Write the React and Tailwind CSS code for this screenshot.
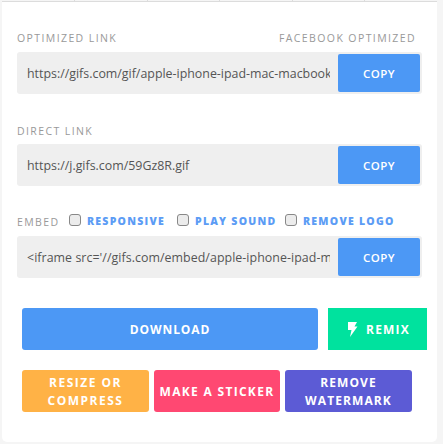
function LinkRow({ value, textClass }) {
  return (
    <div className="ml-[15px] flex h-[42px] w-[405px] items-center rounded-[3px] bg-[#efefef] pl-[10px] pr-[2px]">
      <div className={`mr-[8px] flex-1 overflow-hidden whitespace-nowrap pt-[2px] text-[#555] ${textClass}`}>{value}</div>
      <button className="flex h-[38px] w-[82px] items-center justify-center rounded-[2px] bg-[#4c98f5] pt-[1px] text-[11.5px] font-semibold tracking-[0.5px] text-white">COPY</button>
    </div>
  );
}

function Check({ label, className }) {
  return (
    <span className={`flex items-center ${className}`}>
      <span className="mr-[6px] mb-[3px] h-[12px] w-[12px] rounded-[3px] border border-[#888] bg-[#ececec]" />
      <span className="pt-[2px] text-[10.5px] font-extrabold tracking-[1.25px] text-[#5c9cf5]">{label}</span>
    </span>
  );
}

const label = "h-[14px] text-[10.5px] leading-[16px] tracking-[1.4px] text-[#999]";

export default function App() {
  return (
    <div className="h-[444px] w-[443px] bg-[#f5f5f5] pl-[2px] font-['Open_Sans',sans-serif]">
      <div className="h-[442px] w-[435px] rounded-b-[5px] bg-white">
        <div className="flex h-[1px] bg-[#f5f5f5] pl-[72px]">
          <span className="w-[72.5px] border-l border-[#dcdcdc]" />
          <span className="w-[72.5px] border-l border-[#dcdcdc]" />
          <span className="w-[72.5px] border-l border-[#dcdcdc]" />
          <span className="w-[72.5px] border-l border-[#dcdcdc]" />
          <span className="w-[72.5px] border-l border-[#dcdcdc]" />
        </div>
        <div className="h-[1px] bg-[#dcdcdc]" />
        <div className={`ml-[15px] mr-[21px] mt-[28px] flex justify-between ${label}`}>
          <span>OPTIMIZED LINK</span>
          <span>FACEBOOK OPTIMIZED</span>
        </div>
        <div className="mt-[8px]"><LinkRow textClass="text-[12.4px]" value="https://gifs.com/gif/apple-iphone-ipad-mac-macbook-pro" /></div>
        <div className={`ml-[15px] mt-[29px] ${label}`}>DIRECT LINK</div>
        <div className="mt-[7px]"><LinkRow textClass="text-[12.4px]" value="https://j.gifs.com/59Gz8R.gif" /></div>
        <div className="ml-[15px] mt-[27px] flex h-[16px] items-center">
          <span className={`${label} w-[52px]`}>EMBED</span>
          <Check className="w-[108px]" label="RESPONSIVE" />
          <Check className="w-[108px]" label="PLAY SOUND" />
          <Check label="REMOVE LOGO" />
        </div>
        <div className="mt-[7px]"><LinkRow textClass="text-[12.4px] tracking-[0.05px]" value="<iframe src='//gifs.com/embed/apple-iphone-ipad-mac-macbook" /></div>
        <div className="ml-[20px] mt-[30px] flex gap-[10px]">
          <button className="flex h-[42px] w-[296px] items-center justify-center rounded-[3px] bg-[#4c98f5] pt-[2px] text-[12px] font-bold tracking-[0.9px] text-white">DOWNLOAD</button>
          <button className="flex h-[42px] w-[99px] items-center justify-center gap-[8px] bg-[#00e29e] pl-[2px] pt-[2px] text-[12px] font-bold tracking-[1.2px] text-white">
            <svg className="mb-[2px]" width="11" height="15" viewBox="0 0 11 15" fill="white"><path d="M1 0H10L7.5 4.5H10.5L3 15L4.5 8H1Z" /></svg>
            REMIX
          </button>
        </div>
        <div className="ml-[20px] mt-[20px] flex gap-[5px]">
          <button className="h-[42px] w-[127px] rounded-[3px] bg-[#ffb246] pt-[2px] text-[12px] leading-[18px] font-bold tracking-[1.5px] text-white">RESIZE OR<br />COMPRESS</button>
          <button className="h-[42px] w-[126px] whitespace-nowrap rounded-[3px] bg-[#ff4872] pt-[2px] text-[12px] leading-[18px] font-bold tracking-[1.3px] text-white">MAKE A STICKER</button>
          <button className="h-[42px] w-[127px] rounded-[3px] bg-[#5c5bd5] pt-[2px] text-[12px] leading-[18px] font-bold tracking-[1.1px] text-white">REMOVE<br />WATERMARK</button>
        </div>
      </div>
    </div>
  );
}
